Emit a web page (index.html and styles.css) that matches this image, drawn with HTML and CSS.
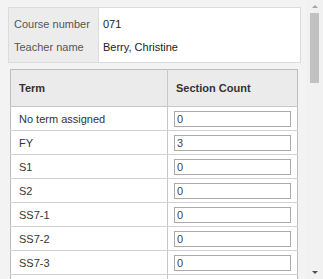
FILE: index.html
```html
<!DOCTYPE html>
<html lang="en">
<head>
    <meta charset="UTF-8">
    <title>Course sections</title>
    <link rel="stylesheet" href="styles.css">
</head>
<body>
    <div class="frame">
        <div class="page">
            <table class="info">
                <tr>
                    <th>Course number</th>
                    <td>071</td>
                </tr>
                <tr>
                    <th>Teacher name</th>
                    <td>Berry, Christine</td>
                </tr>
            </table>

            <table class="grid">
                <thead>
                    <tr>
                        <th class="term-col">Term</th>
                        <th>Section Count</th>
                    </tr>
                </thead>
                <tbody>
                    <tr><td>No term assigned</td><td><input type="text" value="0"></td></tr>
                    <tr><td>FY</td><td><input type="text" value="3"></td></tr>
                    <tr><td>S1</td><td><input type="text" value="0"></td></tr>
                    <tr><td>S2</td><td><input type="text" value="0"></td></tr>
                    <tr><td>SS7-1</td><td><input type="text" value="0"></td></tr>
                    <tr><td>SS7-2</td><td><input type="text" value="0"></td></tr>
                    <tr><td>SS7-3</td><td><input type="text" value="0"></td></tr>
                    <tr><td>SS7-4</td><td><input type="text" value="0"></td></tr>
                </tbody>
            </table>
        </div>
        <div class="scrollbar">
            <span class="arrow up"></span>
            <div class="track">
                <div class="thumb"></div>
            </div>
            <span class="arrow down"></span>
        </div>
    </div>
</body>
</html>
```

FILE: styles.css
```css
html, body {
    margin: 0;
    height: 100%;
}
body {
    background: #f3f3f3;
    font-family: "Liberation Sans", Arial, sans-serif;
    font-size: 11px;
    color: #333;
    overflow: hidden;
}
.frame {
    display: flex;
    height: 100vh;
}
.page {
    flex: 1;
    overflow: hidden;
    padding: 7px 0 0 8px;
}
table {
    border-collapse: collapse;
}
.info {
    width: 293px;
    background: #fff;
    border: 1px solid #dcdcdc;
}
.info th {
    width: 84px;
    background: #ececec;
    border-right: 1px solid #dcdcdc;
    color: #555;
    font-weight: normal;
    text-align: left;
    padding: 0 0 0 5px;
    height: 23px;
}
.info tr:first-child th,
.info tr:first-child td {
    padding-top: 4px;
}
.info tr:last-child th,
.info tr:last-child td {
    padding-bottom: 4px;
}
.info td {
    padding: 0 0 0 4px;
    color: #222;
}
.grid {
    width: 288px;
    margin: 6px 0 0 2px;
    background: #fff;
    border: 1px solid #bdbdbd;
}
.grid th {
    background: #ebebeb;
    text-align: left;
    font-weight: bold;
    color: #333;
    height: 36px;
    padding: 0 0 0 8px;
    border-bottom: 1px solid #c8c8c8;
}
.grid .term-col {
    width: 148px;
    border-right: 1px solid #c8c8c8;
}
.grid td {
    height: 23px;
    padding: 0 0 0 8px;
    border-bottom: 1px solid #d2d2d2;
}
.grid td:first-child {
    border-right: 1px solid #c8c8c8;
}
.grid td:last-child {
    padding-left: 6px;
}
.grid input {
    box-sizing: border-box;
    width: 117px;
    height: 16px;
    border: 1px solid #aaa;
    padding: 0 2px;
    font-family: "Liberation Sans", Arial, sans-serif;
    font-size: 11px;
    color: #444;
    vertical-align: middle;
}
.scrollbar {
    width: 17px;
    display: flex;
    flex-direction: column;
    align-items: center;
    background: #f1f1f1;
}
.track {
    flex: 1;
    width: 100%;
    padding: 0 4px;
    box-sizing: border-box;
}
.thumb {
    height: 70px;
    background: #c1c1c1;
}
.arrow {
    width: 0;
    height: 0;
    margin: 5px 0;
    border-left: 3px solid transparent;
    border-right: 3px solid transparent;
}
.arrow.up {
    border-bottom: 3px solid #a3a3a3;
}
.arrow.down {
    border-top: 3px solid #505050;
}
```
